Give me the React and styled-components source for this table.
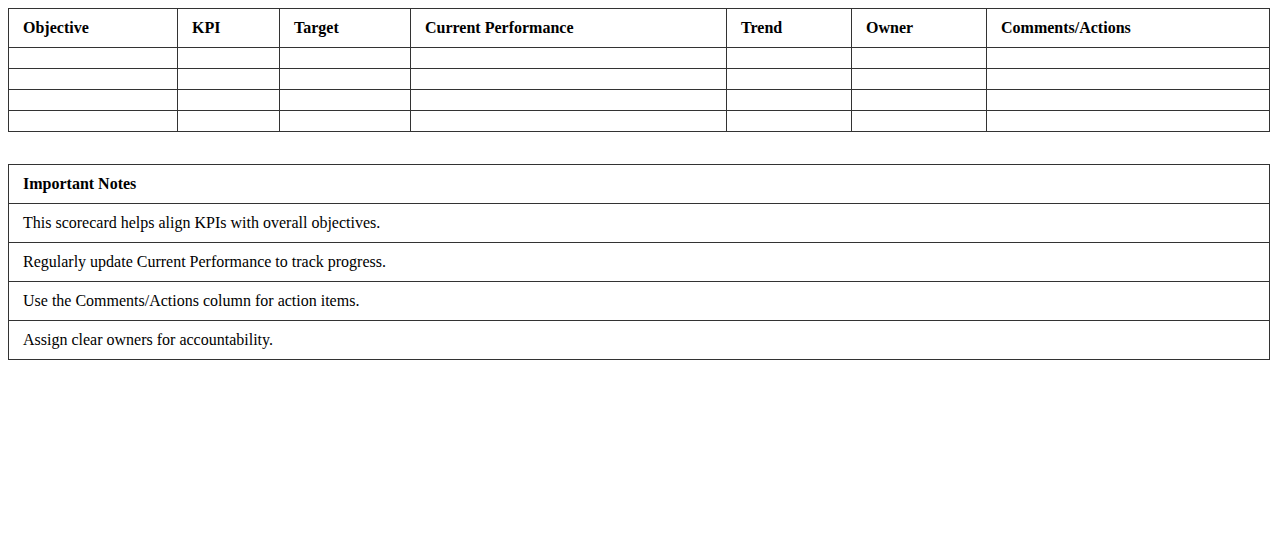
import styled, { createGlobalStyle } from 'styled-components';

const GlobalStyle = createGlobalStyle`
    body {
        margin: 8px;
        background: #fff;
        font-family: "Liberation Serif", "Times New Roman", serif;
        font-size: 16px;
        color: #000;
    }
`;

const columns = [
    { title: 'Objective', width: 169 },
    { title: 'KPI', width: 102 },
    { title: 'Target', width: 131 },
    { title: 'Current Performance', width: 316 },
    { title: 'Trend', width: 125 },
    { title: 'Owner', width: 135 },
    { title: 'Comments/Actions' },
];

const notes = [
    'This scorecard helps align KPIs with overall objectives.',
    'Regularly update Current Performance to track progress.',
    'Use the Comments/Actions column for action items.',
    'Assign clear owners for accountability.',
];

function App() {
    return (
        <>
            <GlobalStyle />
            <Table $gap={32}>
                <colgroup>
                    {columns.map((c) => (
                        <col key={c.title} style={c.width ? { width: c.width } : undefined} />
                    ))}
                </colgroup>
                <thead>
                    <tr>
                        {columns.map((c) => (
                            <Th key={c.title}>{c.title}</Th>
                        ))}
                    </tr>
                </thead>
                <tbody>
                    {[0, 1, 2, 3].map((r) => (
                        <tr key={r}>
                            {columns.map((c) => (
                                <Td key={c.title}></Td>
                            ))}
                        </tr>
                    ))}
                </tbody>
            </Table>

            <Table>
                <thead>
                    <tr>
                        <Th>Important Notes</Th>
                    </tr>
                </thead>
                <tbody>
                    {notes.map((n) => (
                        <tr key={n}>
                            <Td>{n}</Td>
                        </tr>
                    ))}
                </tbody>
            </Table>
        </>
    );
}

const Table = styled.table`
    width: 100%;
    table-layout: fixed;
    border-collapse: collapse;
    margin-bottom: ${(p) => (p.$gap ? `${p.$gap}px` : '0')};
`;

const Th = styled.th`
    border: 1px solid #333;
    padding: 10px 14px;
    text-align: left;
    font-weight: bold;
    line-height: 18px;
`;

const Td = styled.td`
    border: 1px solid #333;
    padding: 10px 14px;
    line-height: 18px;
`;

export default App;
